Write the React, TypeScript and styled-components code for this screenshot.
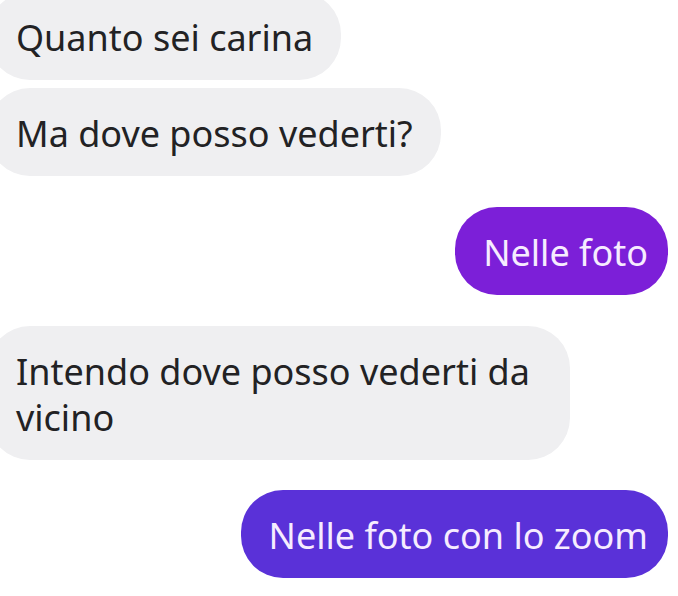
import React from 'react';
import styled, { createGlobalStyle } from 'styled-components';

const GlobalStyle = createGlobalStyle`
  html, body {
    margin: 0;
    padding: 0;
    background: #ffffff;
    overflow: hidden;
  }
`;

const Chat = styled.div`
  width: 678px;
  height: 596px;
  overflow: hidden;
  font-family: "Noto Sans", "Open Sans", sans-serif;
`;

const Thread = styled.div`
  display: flex;
  flex-direction: column;
  margin: -8px 10px 0 -12px;
`;

const Row = styled.div<{ $mine?: boolean; $gap: number }>`
  display: flex;
  justify-content: ${p => (p.$mine ? 'flex-end' : 'flex-start')};
  margin-top: ${p => p.$gap}px;
`;

const Bubble = styled.div<{ $tone?: 'gray' | 'violet' | 'indigo'; $width?: number }>`
  box-sizing: border-box;
  padding: 23px ${p => (p.$tone ? '20px' : '28px')} 19px 28px;
  border-radius: 42px;
  font-size: 36px;
  line-height: 46px;
  color: ${p => (p.$tone ? '#f6ecff' : '#222224')};
  background: ${p =>
    p.$tone === 'violet' ? '#7c1fd8' : p.$tone === 'indigo' ? '#5a31d8' : '#efeff1'};
  max-width: ${p => (p.$width ? `${p.$width}px` : 'none')};
`;

const messages = [
  { text: 'Quanto sei carina', gap: 0 },
  { text: 'Ma dove posso vederti?', gap: 8 },
  { text: 'Nelle foto', gap: 31, tone: 'violet' as const },
  { text: 'Intendo dove posso vederti da vicino', gap: 31, width: 582 },
  { text: 'Nelle foto con lo zoom', gap: 30, tone: 'indigo' as const },
];

export default function App() {
  return (
    <Chat>
      <GlobalStyle />
      <Thread>
        {messages.map(m => (
          <Row key={m.text} $mine={!!m.tone} $gap={m.gap}>
            <Bubble $tone={m.tone} $width={m.width}>
              {m.text}
            </Bubble>
          </Row>
        ))}
      </Thread>
    </Chat>
  );
}
